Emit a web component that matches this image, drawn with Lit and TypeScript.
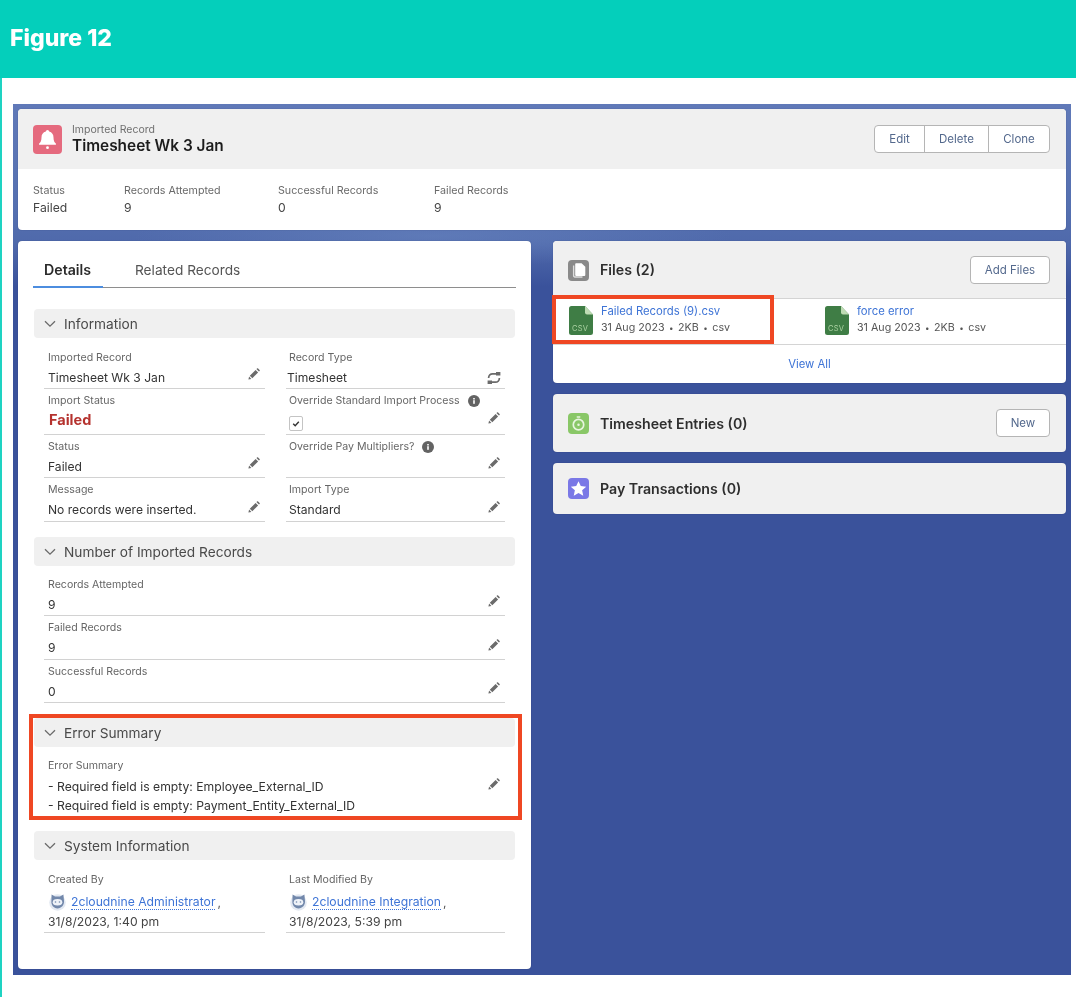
import { LitElement, html, css } from "lit";
import { customElement } from "lit/decorators.js";

const pencil = html`<svg class="pen" viewBox="0 0 12 12"><path d="M0.4 11.6l.7-3L3.4 10.9zM1.8 7.7L7.6 1.9l2.5 2.5-5.8 5.8zM8.4 1.1l.7-.7c.3-.3.7-.3 1 0l1.5 1.5c.3.3.3.7 0 1l-.7.7z"/></svg>`;
const info = html`<svg class="info" viewBox="0 0 12 12"><circle cx="6" cy="6" r="6" fill="#636363"/><rect x="5.2" y="5.2" width="1.6" height="3.6" fill="#fff"/><rect x="5.2" y="3" width="1.6" height="1.5" fill="#fff"/></svg>`;
const chevron = html`<svg class="chev" viewBox="0 0 12 8"><path d="M1 1.2l5 5 5-5" fill="none" stroke="#6a6a6a" stroke-width="1.3"/></svg>`;
const avatar = html`<svg class="avatar" viewBox="0 0 17 18"><circle cx="8.5" cy="9.5" r="8.3" fill="#e3e9f2"/><path d="M2.6 1.4l3.4 2h5l3.4-2 .6 6.6c.4 4-2.6 7.4-6.5 7.4S2 12 2.4 8z" fill="#7288ab"/><ellipse cx="8.5" cy="9.2" rx="4.8" ry="3.3" fill="#eef2f8"/><circle cx="6.5" cy="9" r=".8" fill="#7288ab"/><circle cx="10.5" cy="9" r=".8" fill="#7288ab"/></svg>`;
const swap = html`<svg class="switch" viewBox="0 0 14 12"><path d="M1.6 6C1.6 3 3.4 1.8 5.6 1.8H9" fill="none" stroke="#6b6b6b" stroke-width="1.7"/><path d="M12.4 6c0 3-1.8 4.2-4 4.2H5" fill="none" stroke="#6b6b6b" stroke-width="1.7"/><path d="M9 0h4.4v3.6H9zM.6 8.4H5V12H.6z" fill="#6b6b6b"/></svg>`;

@customElement("app-root")
export class AppRoot extends LitElement {
  static styles = css`
    :host { display: block; width: 1076px; height: 997px; overflow: hidden; background: #fff; font-family: Inter, "Liberation Sans", sans-serif; color: #2b2b2b; filter: blur(.35px); }
    * { box-sizing: border-box; }
    .banner { height: 78px; background: #04cfbb; display: flex; align-items: center; padding: 0 0 3px 10px; color: #fff; font-size: 23px; font-weight: 800; font-family: Inter, sans-serif; }
    .page { height: 919px; border-left: 2px solid #1ed3c2; padding: 26px 5px 0 11px; }
    .panel { height: 871px; padding: 5px; display: flex; flex-direction: column; gap: 11px;
      background:
        radial-gradient(ellipse 300px 30px at 420px 132px, rgba(120,150,205,.35), transparent),
        linear-gradient(180deg, #6079b8 0, #5570b0 12%, #4f69ab 16%, #3a529b 21%, #3a529b 100%); }
    .card { background: #fff; border-radius: 4px; box-shadow: 0 0 1px rgba(20,30,70,.5); }

    .hero { height: 121px; overflow: hidden; }
    .hero-top { height: 60px; background: #f0f0f0; display: flex; align-items: center; padding: 0 16px 0 15px; }
    .hero-icon { width: 29px; height: 29px; border-radius: 4px; background: #e56a7e; display: flex; align-items: center; justify-content: center; flex: none; }
    .hero-icon svg { width: 23px; height: 23px; }
    .hero-text { margin-left: 10px; flex: 1; }
    .eyebrow { font-size: 10.5px; line-height: 13px; color: #6f6f6f; }
    .title { font-size: 15.4px; line-height: 19px; font-weight: 600; color: #1c1c1c; }
    .btn-group { display: flex; }
    .btn { height: 28px; border: 1px solid #b5b5b5; background: #fff; display: flex; align-items: center; justify-content: center; font-size: 11.5px; font-weight: 400; color: #54698d; border-radius: 4px; }
    .btn-group .btn { border-radius: 0; margin-left: -1px; }
    .btn-group .btn:first-child { border-radius: 4px 0 0 4px; margin-left: 0; }
    .btn-group .btn:last-child { border-radius: 0 4px 4px 0; }
    .stats { display: flex; padding: 15px 0 0 15px; }
    .stat { font-size: 10.7px; line-height: 14px; color: #6a6a6a; }
    .stat b { display: block; font-weight: 400; font-size: 12.2px; line-height: 19px; color: #444; }

    .cols { display: grid; grid-template-columns: 513px 513px; gap: 22px; align-items: start; }
    .main { height: 728px; padding: 15px 15px 0 15px; }
    .tabs { display: flex; height: 32px; border-bottom: 1px solid #8e8e8e; font-size: 13.7px; align-items: center; }
    .tab { height: 32px; display: flex; align-items: center; color: #555; padding-bottom: 3px; }
    .tab.on { width: 70px; padding-left: 11px; font-size: 14.2px; font-weight: 600; color: #2b2b2b; border-bottom: 2px solid #4c8ddf; margin-right: 32px; }
    .section { position: relative; margin: 15.5px 1px 0; }
    .section.first { margin-top: 21px; }
    .section.err { margin-top: 15px; }
    .section.sys { margin-top: 16.5px; }
    .sec-head { height: 29px; background: #f0f0f0; border-radius: 4px; display: flex; align-items: center; padding-left: 10px; font-size: 13.7px; color: #4a4a4a; }
    .chev { width: 12px; height: 8px; margin-right: 8px; }
    .grid { display: grid; grid-template-columns: 221px 219px; column-gap: 21px; padding: 6.5px 0 0 10px; }
    .first .grid { padding-top: 7.5px; }
    .grid.one { grid-template-columns: 461px; }
    .field { position: relative; padding-top: 5px; border-bottom: 1px solid #d2d2d2; min-height: 43.5px; }
    .field.tall { min-height: 45.5px; }
    .label { display: flex; align-items: center; gap: 8px; padding-left: 4px; font-size: 10.6px; line-height: 14px; color: #666; }
    .value { position: relative; padding: 0 4px; margin-top: 2px; font-size: 12.1px; line-height: 21.5px; color: #333; white-space: pre; min-height: 21.5px; }
    .value.fail { color: #b5322e; font-size: 14.5px; font-weight: 700; line-height: 20.5px; padding-left: 5px; }
    .value.flush { padding-left: 1px; }
    .value.chk { padding-top: 5.5px; }
    .grid:not(.one) > .field:nth-child(even) > .label { padding-left: 3px; }
    .grid:not(.one) > .field:nth-child(even) > .value:not(.flush) { padding-left: 3px; }
    .field:nth-child(even) > .who { padding-left: 4px; }
    .field:nth-child(even) > .date { padding-left: 3px; }
    .pen { position: absolute; right: 5px; bottom: 8px; width: 12px; height: 12px; fill: #6b6b6b; }
    .tall .pen { bottom: 10px; }
    .switch { position: absolute; right: 4px; bottom: 4px; width: 14px; height: 12px; }
    .info { width: 12px; height: 12px; flex: none; }
    .check { display: block; width: 14px; height: 15px; border: 1px solid #c4c4c4; border-radius: 2px; background: #fff; }
    .check svg { display: block; width: 12px; height: 13px; }
    .mark { position: absolute; left: -5.5px; right: -6.5px; top: -4px; bottom: -5.5px; border: 4px solid #ef4723; pointer-events: none; }
    .err .grid { padding-top: 11.5px; }
    .err .field { border-bottom: 0; padding-top: 0; min-height: 0; }
    .err .value { font-size: 12.2px; line-height: 19px; margin-top: 4px; }
    .err .pen { top: 19px; bottom: auto; }
    .sys .grid { padding-top: 5px; }
    .sys .field { height: 68px; padding-top: 7.5px; }
    .who { display: flex; align-items: center; padding: 6px 0 0 5px; height: 25.5px; font-size: 12.2px; }
    .avatar { width: 17px; height: 18px; margin-right: 5px; flex: none; }
    .who a { color: #3e74d6; border-bottom: 1px dotted #3e74d6; line-height: 14px; }
    .who span { margin-left: 2px; color: #555; }
    .date { padding-left: 4px; font-size: 12.2px; line-height: 16px; margin-top: 2px; color: #444; }

    .side { display: flex; flex-direction: column; gap: 11px; }
    .rel-head { display: flex; align-items: center; background: #f0f0f0; padding: 0 16px 0 15px; height: 58px; border-radius: 4px; font-size: 14.2px; font-weight: 600; color: #2e2e2e; }
    .rel-head .name { flex: 1; margin-left: 11px; }
    .card > .rel-head .name { margin-top: -2px; }
    .rel-head.short { height: 51px; }
    .sq { width: 21px; height: 21px; border-radius: 4px; display: flex; align-items: center; justify-content: center; flex: none; }
    .sq svg { width: 17px; height: 17px; }
    .files { position: relative; height: 47px; border-top: 1px solid #d4d4d4; border-bottom: 1px solid #d4d4d4; display: grid; grid-template-columns: 256px 256px; margin-top: -1px; }
    .file { display: flex; padding: 7px 0 0 16px; }
    .doc { position: relative; width: 24px; height: 29px; flex: none; }
    .doc svg { position: absolute; inset: 0; width: 24px; height: 29px; }
    .doc span { position: absolute; left: 3px; bottom: 2.5px; font-size: 7.5px; line-height: 9px; color: #a9d0a0; letter-spacing: .2px; }
    .fmeta { margin-left: 8px; margin-top: -2px; }
    .fname { font-size: 11.3px; line-height: 15px; color: #3e74d6; }
    .fline { display: flex; align-items: center; font-size: 10.7px; line-height: 16px; margin-top: 1px; color: #555; white-space: pre; }
    .dot { font-size: 8px; margin: 0 4.5px; }
    .view { height: 38px; display: flex; align-items: center; justify-content: center; font-size: 11.3px; color: #3e74d6; }
    .filemark { position: absolute; left: -1.5px; top: -4px; width: 222px; height: 49px; border: 4px solid #ef4723; pointer-events: none; }
  `;

  field(label: string, value: unknown, opts: { cls?: string; valCls?: string; info?: boolean; icon?: unknown } = {}) {
    return html`<div class="field ${opts.cls ?? ""}">
      <div class="label">${label}${opts.info ? info : ""}</div>
      <div class="value ${opts.valCls ?? ""}">${value}</div>
      ${opts.icon === undefined ? pencil : opts.icon}
    </div>`;
  }

  section(title: string, body: unknown, cls = "") {
    return html`<div class="section ${cls}"><div class="sec-head">${chevron}${title}</div>${body}</div>`;
  }

  file(name: string) {
    return html`<div class="file">
      <div class="doc"><svg viewBox="0 0 24 29"><path d="M2.5 0H16l8 8.5V26.5A2.5 2.5 0 0 1 21.5 29h-19A2.5 2.5 0 0 1 0 26.5V2.5A2.5 2.5 0 0 1 2.5 0z" fill="#3f7d45"/><path d="M16 0l8 8.5h-6a2 2 0 0 1-2-2z" fill="#bfdcb4"/></svg><span>CSV</span></div>
      <div class="fmeta"><div class="fname">${name}</div><div class="fline">31 Aug 2023<span class="dot">•</span>2KB<span class="dot">•</span>csv</div></div>
    </div>`;
  }

  render() {
    const stats: [string, string, number][] = [["Status", "Failed", 91], ["Records Attempted", "9", 154], ["Successful Records", "0", 156], ["Failed Records", "9", 100]];
    return html`
      <div class="banner">Figure 12</div>
      <div class="page"><div class="panel">
        <div class="card hero">
          <div class="hero-top">
            <div class="hero-icon"><svg viewBox="0 0 18 18"><path d="M9 1.5a1.3 1.3 0 0 1 1.3 1.3c2.2.6 3.4 2.3 3.4 4.6 0 2.4.6 3.8 1.8 4.8.4.4.2 1-.4 1H2.9c-.6 0-.8-.6-.4-1 1.2-1 1.8-2.4 1.8-4.8 0-2.3 1.2-4 3.4-4.6A1.3 1.3 0 0 1 9 1.5z" fill="#fff"/><circle cx="9" cy="15.4" r="1.1" fill="#fff"/></svg></div>
            <div class="hero-text"><div class="eyebrow">Imported Record</div><div class="title">Timesheet Wk 3 Jan</div></div>
            <div class="btn-group">
              <div class="btn" style="width:51px">Edit</div><div class="btn" style="width:65px">Delete</div><div class="btn" style="width:62px">Clone</div>
            </div>
          </div>
          <div class="stats">${stats.map(([l, v, w]) => html`<div class="stat" style="width:${w}px">${l}<b>${v}</b></div>`)}</div>
        </div>
        <div class="cols">
          <div class="card main">
            <div class="tabs"><div class="tab on">Details</div><div class="tab">Related Records</div></div>
            ${this.section("Information", html`<div class="grid">
              ${this.field("Imported Record", "Timesheet Wk 3 Jan")}
              ${this.field("Record Type", "Timesheet", { valCls: "flush", icon: swap })}
              ${this.field("Import Status", "Failed", { cls: "tall", valCls: "fail", icon: "" })}
              ${this.field("Override Standard Import Process", html`<span class="check"><svg viewBox="0 0 12 13"><path d="M3.2 6.8l2 2 3.6-4" fill="none" stroke="#333" stroke-width="1.4"/></svg></span>`, { cls: "tall", valCls: "chk", info: true })}
              ${this.field("Status", "Failed")}
              ${this.field("Override Pay Multipliers?", "", { info: true })}
              ${this.field("Message", "No records were inserted.")}
              ${this.field("Import Type", "Standard")}
            </div>`, "first")}
            ${this.section("Number of Imported Records", html`<div class="grid one">
              ${this.field("Records Attempted", "9")}
              ${this.field("Failed Records", "9")}
              ${this.field("Successful Records", "0")}
            </div>`)}
            ${this.section("Error Summary", html`<div class="grid one">
              <div class="field"><div class="label">Error Summary</div>
                <div class="value">- Required field is empty: Employee_External_ID
- Required field is empty: Payment_Entity_External_ID</div>${pencil}</div>
            </div><div class="mark"></div>`, "err")}
            ${this.section("System Information", html`<div class="grid">
              <div class="field"><div class="label">Created By</div><div class="who">${avatar}<a>2cloudnine Administrator</a><span>,</span></div><div class="date">31/8/2023, 1:40 pm</div></div>
              <div class="field"><div class="label">Last Modified By</div><div class="who">${avatar}<a>2cloudnine Integration</a><span>,</span></div><div class="date">31/8/2023, 5:39 pm</div></div>
            </div>`, "sys")}
          </div>
          <div class="side">
            <div class="card">
              <div class="rel-head">
                <div class="sq" style="background:#8a8a8a"><svg viewBox="0 0 15 15"><path d="M3.2 3v9.2a1 1 0 0 0 1 1H11" fill="none" stroke="#dedede" stroke-width="1.2"/><path d="M5.4 1h4.8l3.3 3.3v7.2a.8.8 0 0 1-.8.8H5.4a.8.8 0 0 1-.8-.8V1.8a.8.8 0 0 1 .8-.8z" fill="#fff"/></svg></div>
                <div class="name">Files (2)</div>
                <div class="btn" style="width:80px">Add Files</div>
              </div>
              <div class="files">${this.file("Failed Records (9).csv")}${this.file("force error")}<div class="filemark"></div></div>
              <div class="view">View All</div>
            </div>
            <div class="card rel-head">
              <div class="sq" style="background:#89c767"><svg viewBox="0 0 15 15"><circle cx="7.5" cy="8.5" r="4.6" fill="none" stroke="#e8f5df" stroke-width="1.5"/><rect x="5.8" y="1" width="3.4" height="1.4" rx=".6" fill="#e8f5df"/><circle cx="7.5" cy="8.5" r="1.1" fill="#e8f5df"/></svg></div>
              <div class="name">Timesheet Entries (0)</div>
              <div class="btn" style="width:54px">New</div>
            </div>
            <div class="card rel-head short">
              <div class="sq" style="background:#7a78e6"><svg viewBox="0 0 15 15"><path d="M7.5 1l2 4.4 4.8.5-3.6 3.2 1 4.7-4.2-2.4-4.2 2.4 1-4.7L.7 5.9l4.8-.5z" fill="#fff"/></svg></div>
              <div class="name">Pay Transactions (0)</div>
            </div>
          </div>
        </div>
      </div></div>
    `;
  }
}
